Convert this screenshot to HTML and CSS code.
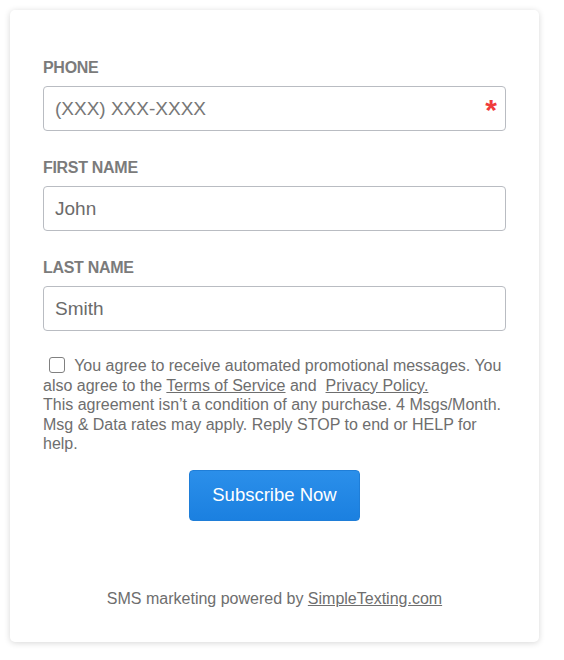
FILE: index.html
```html
<!DOCTYPE html>
<html lang="en">
<head>
<meta charset="utf-8">
<title>SMS Signup</title>
<link rel="stylesheet" href="styles.css">
</head>
<body>
<div class="card">
  <form class="form">
    <div class="field">
      <label class="label">PHONE</label>
      <div class="input-wrap">
        <input class="input input-phone" type="text" placeholder="(XXX) XXX-XXXX">
        <span class="req">*</span>
      </div>
    </div>
    <div class="field">
      <label class="label">FIRST NAME</label>
      <input class="input" type="text" value="John">
    </div>
    <div class="field">
      <label class="label">LAST NAME</label>
      <input class="input" type="text" value="Smith">
    </div>
    <div class="consent">
      <span class="checkbox"></span> You agree to receive automated promotional messages. You also agree to the <a href="#">Terms of Service</a> and&nbsp; <a href="#">Privacy Policy.</a><br>This agreement isn’t a condition of any purchase. 4 Msgs/Month. Msg &amp; Data rates may apply. Reply STOP to end or HELP for help.
    </div>
    <div class="actions">
      <button class="btn" type="button">Subscribe Now</button>
    </div>
  </form>
  <div class="footer">SMS marketing powered by <a href="#">SimpleTexting.com</a></div>
</div>
</body>
</html>
```
FILE: styles.css
```css
* { box-sizing: border-box; }
html, body { margin: 0; padding: 0; background: #fff; }
body {
  font-family: "Liberation Sans", Arial, sans-serif;
  padding: 10px 25px 18px 10px;
}
.card {
  width: 529px;
  height: 632px;
  background: #fff;
  border-radius: 5px;
  box-shadow: 0 1px 6px rgba(0,0,0,0.16);
  padding: 49px 33px 0 33px;
  display: flex;
  flex-direction: column;
}
.form { display: flex; flex-direction: column; }
.field { display: flex; flex-direction: column; margin-bottom: 28px; }
.field:nth-child(3) { margin-bottom: 25px; }
.label {
  font-size: 16px;
  line-height: 18px;
  font-weight: bold;
  letter-spacing: -0.3px;
  color: #7b7b7b;
  margin-bottom: 9px;
}
.input-wrap { position: relative; }
.input {
  width: 100%;
  height: 45px;
  border: 1px solid #b9bcc2;
  border-radius: 4px;
  padding: 0 11px;
  font-family: "Liberation Sans", Arial, sans-serif;
  font-size: 19px;
  color: #6b6b6b;
  background: #fff;
  outline: none;
}
.input::placeholder { color: #777; opacity: 1; }
.req {
  position: absolute;
  right: 9px;
  top: 9px;
  color: #f03c3c;
  font-size: 30px;
  font-weight: bold;
  line-height: 30px;
}
.consent {
  font-size: 16px;
  line-height: 19.5px;
  color: #6e6e6e;
}
.checkbox {
  display: inline-block;
  width: 16px;
  height: 16px;
  border: 1px solid #808080;
  border-radius: 3px;
  vertical-align: -2px;
  margin-left: 6px;
  margin-right: 5px;
  background: #fff;
}
.consent a, .footer a { color: #6e6e6e; text-decoration: underline; }
.actions { display: flex; justify-content: center; margin-top: 16px; }
.btn {
  width: 171px;
  height: 51px;
  border: 1px solid #1f7ed8;
  border-radius: 4px;
  background: linear-gradient(#2b8fea, #1b80e0);
  color: #fff;
  font-family: "Liberation Sans", Arial, sans-serif;
  font-size: 18.5px;
  cursor: pointer;
}
.footer {
  margin-top: 69px;
  text-align: center;
  font-size: 16px;
  line-height: 18px;
  color: #6e6e6e;
}
```
